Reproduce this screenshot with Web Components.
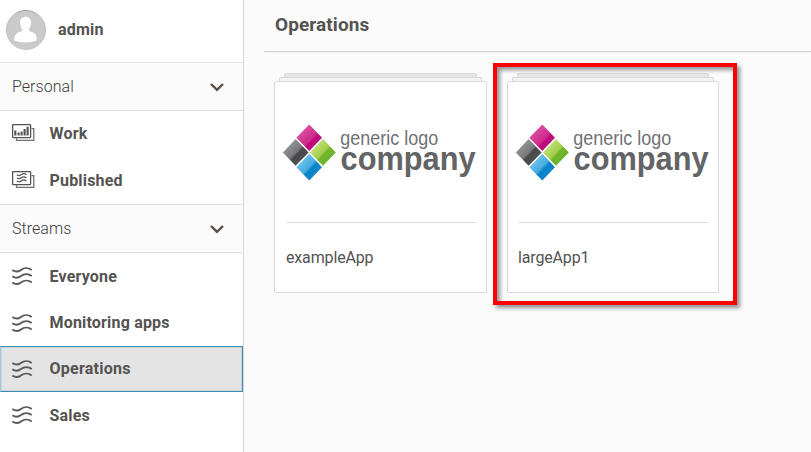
<!DOCTYPE html>
<html lang="en">
<head>
<meta charset="utf-8">
<title>Operations</title>
<style>
html, body { margin: 0; height: 100%; overflow: hidden; }
body { font-family: Roboto, "Noto Sans", sans-serif; color: #545352; background: #fbfbfb; }
</style>
</head>
<body>
<hub-app></hub-app>
<script>
const define = (name, markup, setup) => customElements.define(name, class extends HTMLElement {
  connectedCallback() {
    if (this.shadowRoot) return;
    const root = this.attachShadow({ mode: 'open' });
    root.innerHTML = typeof markup === 'function' ? markup(this) : markup;
    if (setup) setup(this, root);
  }
});

const wave = 'M.3 3.1C3 4.9 6.3 4.9 9 2.9C12 .6 16.5 .4 19.7 2.9M.3 9.3C3 11.1 6.3 11.1 9 9.1C12 6.8 16.5 6.6 19.7 9.1M.3 15.6C3 17.4 6.3 17.4 9 15.4C12 13.1 16.5 12.9 19.7 15.4';
const sheets = '<path d="M19.5 4.6H21.8V16.4H4.5V14.2" fill="none" stroke="#707070" stroke-width="1.3"/><rect x=".6" y=".6" width="18" height="13" rx=".8" fill="none" stroke="#545352" stroke-width="1.3"/>';
const icons = {
  stream: `<svg width="21" height="19" viewBox="0 0 21 19"><path d="${wave}" fill="none" stroke="#595959" stroke-width="1.9"/></svg>`,
  work: `<svg width="23" height="18" viewBox="0 0 23 18">${sheets}<path d="M3.3 11.5V6.5M6.6 11.5V8.6M9.6 11.5V7.4M12.6 11.5V5M15.6 11.5V2.8" stroke="#545352" stroke-width="2.1"/></svg>`,
  published: `<svg width="23" height="18" viewBox="0 0 23 18">${sheets}<path transform="translate(4.6 2.3) scale(.5)" d="${wave}" fill="none" stroke="#545352" stroke-width="2.5"/></svg>`
};

define('hub-icon', el => `<style>:host{display:block;width:37.5px;flex:none}:host([name=work]){padding-bottom:2px}:host([name=published]){padding-bottom:1px}svg{display:block}</style>${icons[el.getAttribute('name')]}`);

define('hub-avatar', `<style>:host{display:block;width:40px;height:40px}svg{display:block}</style>
<svg width="40" height="40" viewBox="0 0 40 40"><defs><linearGradient id="g" x2="0" y2="1"><stop stop-color="#9c9c9c"/><stop offset=".12" stop-color="#b6b6b6"/><stop offset="1" stop-color="#c4c4c4"/></linearGradient></defs>
<circle cx="20" cy="20" r="19.5" fill="#cacaca" stroke="url(#g)"/>
<path d="M19.5 6.7C23.4 6.7 25.2 9 25 12.9C24.8 16 23.6 18.3 22.8 19.6C22.6 21.4 24.3 21.6 26.6 22.3C30 23.4 30.7 26 30.7 30.5C24 33 14.5 33 8 30.5C8.2 26.2 9.3 23.4 12.5 22.3C15 21.5 16.7 21.4 16.4 19.6C15.2 18 14.3 15.8 14.1 12.9C13.9 9 16 6.7 19.5 6.7Z" fill="#fff"/></svg>`);

define('hub-user', `<style>:host{display:flex;align-items:center;height:62px;padding:0 6px 3px;box-sizing:border-box}
b{font:700 16px/20px Roboto,sans-serif;margin-left:12px;letter-spacing:.22px}</style><hub-avatar></hub-avatar><b><slot></slot></b>`);

define('hub-section', `<style>:host{display:flex;align-items:center;justify-content:space-between;height:49px;box-sizing:border-box;border:solid #e2e2e2;border-width:1px 0;background:#fbfbfb;padding:0 19px 0 12px;font:300 16px/20px Roboto,sans-serif;color:#3c3c3c;letter-spacing:.05px}svg{display:block}</style>
<slot></slot><svg width="14" height="10" viewBox="0 0 14 10"><path d="M1 2L7 7.8L13 2" fill="none" stroke="#594e46" stroke-width="2.4"/></svg>`);

define('hub-item', el => `<style>:host{display:flex;align-items:center;height:46px;box-sizing:border-box;padding-left:12px;font:700 16px/20px Roboto,sans-serif;letter-spacing:.18px}
:host([tall]){height:47px}:host([selected]){background:#e4e4e4;border:1px solid #418ab3;border-left-color:#a7c8da;padding-left:11px;box-shadow:inset 0 0 0 1px #c4d5de;letter-spacing:.25px}</style>
<hub-icon name="${el.getAttribute('icon') || 'stream'}"></hub-icon><span><slot></slot></span>`);

define('hub-sidebar', `<style>:host{display:block;width:243px;height:452px;flex:none;background:#fff;border-right:1px solid #d9d9d9}nav{display:flex;flex-direction:column}</style>
<nav><hub-user>admin</hub-user>
<hub-section>Personal</hub-section>
<hub-item icon="work">Work</hub-item>
<hub-item icon="published" tall>Published</hub-item>
<hub-section>Streams</hub-section>
<hub-item tall>Everyone</hub-item>
<hub-item>Monitoring apps</hub-item>
<hub-item selected>Operations</hub-item>
<hub-item tall>Sales</hub-item></nav>`);

define('company-logo', `<style>:host{display:block}svg{display:block;overflow:visible}text{font-family:"Liberation Sans",Arial,sans-serif;fill:#626466}</style>
<svg width="196" height="60" viewBox="0 0 196 60"><defs>
<linearGradient id="p" x1="0" y1="0" x2="1" y2="1"><stop stop-color="#df65ac"/><stop offset=".56" stop-color="#cf2b8c"/><stop offset=".62" stop-color="#bd087b"/><stop offset="1" stop-color="#c01580"/></linearGradient>
<linearGradient id="k" x1="0" y1="0" x2="1" y2="1"><stop stop-color="#aaa"/><stop offset=".5" stop-color="#77787a"/><stop offset=".56" stop-color="#48484b"/><stop offset="1" stop-color="#55565a"/></linearGradient>
<linearGradient id="n" x1="0" y1="0" x2="1" y2="1"><stop stop-color="#d6ec93"/><stop offset=".5" stop-color="#a3cf4b"/><stop offset=".56" stop-color="#70b52c"/><stop offset="1" stop-color="#69b42e"/></linearGradient>
<linearGradient id="b" x1="0" y1="0" x2="1" y2="1"><stop stop-color="#8bd3f4"/><stop offset=".5" stop-color="#46acdf"/><stop offset=".56" stop-color="#0b83c9"/><stop offset="1" stop-color="#1689cd"/></linearGradient></defs>
<g transform="translate(0 .8)"><path d="M27.3 1.6L40 15L27.3 28.2L14.3 15Z" fill="url(#p)"/>
<path d="M13.6 16.2L26.6 29.6L13.6 43L.8 29.6Z" fill="url(#k)"/>
<path d="M41 16.2L53.8 29.6L41 43L28 29.6Z" fill="url(#n)"/>
<path d="M27.3 31L40 44.4L27.3 57.8L14.3 44.4Z" fill="url(#b)"/></g>
<text x="58.2" y="22.5" font-size="19.5" textLength="98" lengthAdjust="spacingAndGlyphs" style="fill:#707274">generic logo</text>
<text x="58.6" y="48" font-size="33" font-weight="700" textLength="135" lengthAdjust="spacingAndGlyphs">company</text></svg>`);

define('app-card', `<style>:host{display:flex;flex-direction:column;align-items:center;width:var(--card,213px);box-sizing:border-box}
.s{height:4px;box-sizing:border-box;border:1px solid #d9d9d9;border-bottom:0;border-radius:2px 2px 0 0;align-self:stretch}
.a{margin:0 10px;background:#e6e6e6}.b{margin:0 5px;background:#f2f2f2}
article{display:flex;flex-direction:column;align-self:stretch;height:212px;box-sizing:border-box;border:1px solid #d9d9d9;border-radius:2px;background:#fff;padding:40px 10px 0 var(--inset,11px)}
company-logo{margin-left:calc(7px - var(--inset,11px));height:60px}hr{width:190px;border:0;height:1px;background:#d9d9d9;margin:40px 0 0}
p{margin:25px 0 0;font:400 16px/20px Roboto,sans-serif;letter-spacing:-.15px}</style>
<div class="s a"></div><div class="s b"></div><article><company-logo></company-logo><hr><p><slot></slot></p></article>`);

define('focus-frame', `<style>:host{position:absolute;left:493px;top:63px;width:244px;height:242px;box-sizing:border-box;border:4px solid #f00;box-shadow:3px 3px 4px rgba(0,0,0,.42),inset 3px 3px 4px rgba(0,0,0,.42);pointer-events:none}</style>`);

define('hub-content', `<style>:host{display:block;flex:1;min-width:0;padding-left:20px}
header{box-sizing:border-box;border-bottom:1px solid #d5d5d5;box-shadow:0 1px 2px #eee;clip-path:inset(0 0 -4px 0);padding:12px 0 0 11px;height:52px}
h1{margin:0;font:700 19px/25px Roboto,sans-serif;letter-spacing:.08px}
section{display:flex;gap:20px;padding:21px 0 0 10px}</style>
<header><h1>Operations</h1></header><section><app-card>exampleApp</app-card><app-card style="--card:212px;--inset:10px">largeApp1</app-card></section>`);

define('hub-app', `<style>:host{display:flex;width:811px;height:452px;overflow:hidden;position:relative}</style><hub-sidebar></hub-sidebar><hub-content></hub-content><focus-frame></focus-frame>`);

</script>
</body>
</html>
